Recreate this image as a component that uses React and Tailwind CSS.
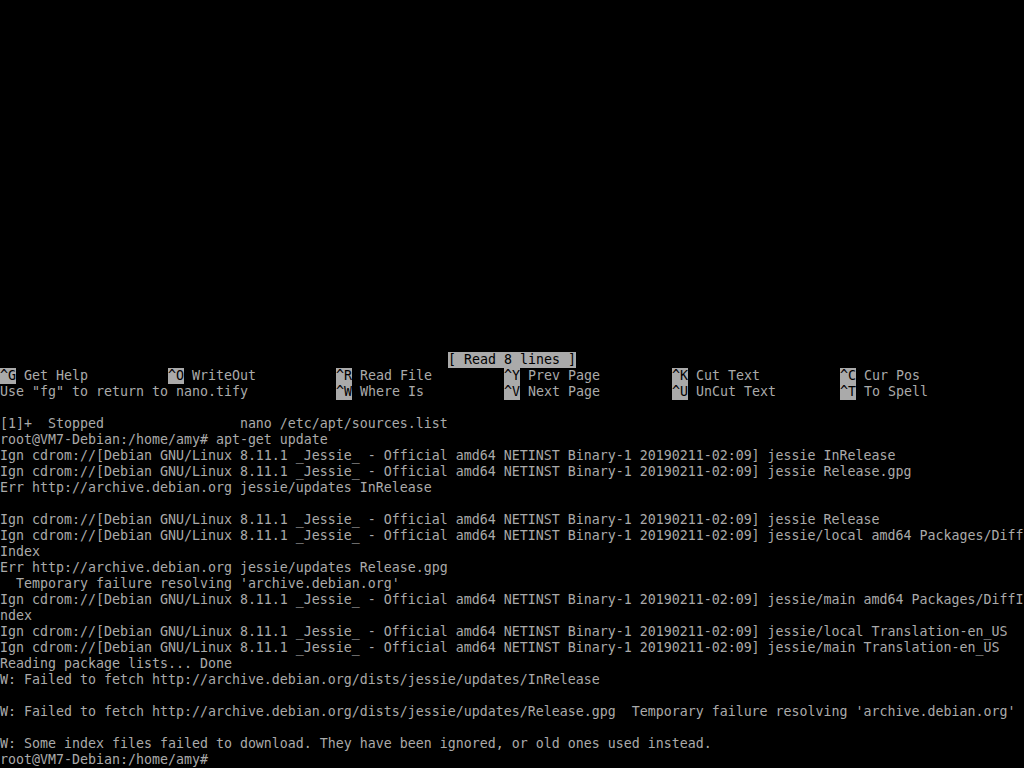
const ign = 'Ign cdrom://[Debian GNU/Linux 8.11.1 _Jessie_ - Official amd64 NETINST Binary-1 20190211-02:09] '

// reverse-video cell, full 16px row height like the console
const Hi = ({ children }) => (
  <span className="inline-block h-[16px] align-top bg-[#aaaaaa] text-black">{children}</span>
)

// shortcut cell in the nano help bar: highlighted key + label, 21 columns wide
const Key = ({ k, label }) => (
  <span className="inline-block w-[168px] align-top">
    <Hi>{k}</Hi> {label}
  </span>
)

const Line = ({ children }) => (
  <div className="h-[16px] leading-[16px] whitespace-pre">{children}</div>
)

const App = () => {
  const tail = [
    '[1]+  Stopped                 nano /etc/apt/sources.list',
    'root@VM7-Debian:/home/amy# apt-get update',
    ign + 'jessie InRelease',
    ign + 'jessie Release.gpg',
    'Err http://archive.debian.org jessie/updates InRelease',
    '',
    ign + 'jessie Release',
    ign + 'jessie/local amd64 Packages/Diff',
    'Index',
    'Err http://archive.debian.org jessie/updates Release.gpg',
    "  Temporary failure resolving 'archive.debian.org'",
    ign + 'jessie/main amd64 Packages/DiffI',
    'ndex',
    ign + 'jessie/local Translation-en_US',
    ign + 'jessie/main Translation-en_US',
    'Reading package lists... Done',
    'W: Failed to fetch http://archive.debian.org/dists/jessie/updates/InRelease',
    '',
    "W: Failed to fetch http://archive.debian.org/dists/jessie/updates/Release.gpg  Temporary failure resolving 'archive.debian.org'",
    '',
    'W: Some index files failed to download. They have been ignored, or old ones used instead.',
    'root@VM7-Debian:/home/amy#',
  ]

  return (
    <div className="w-[1024px] h-[768px] bg-black text-[#aaaaaa] overflow-hidden font-['DejaVu_Sans_Mono',monospace] text-[13.29px]">
      {/* empty nano buffer area */}
      <div className="h-[352px]" />

      {/* status line */}
      <Line>
        <span className="inline-block w-[448px]" />
        <Hi>[ Read 8 lines ]</Hi>
      </Line>

      {/* help bar */}
      <Line>
        <Key k="^G" label="Get Help" />
        <Key k="^O" label="WriteOut" />
        <Key k="^R" label="Read File" />
        <Key k="^Y" label="Prev Page" />
        <Key k="^K" label="Cut Text" />
        <Key k="^C" label="Cur Pos" />
      </Line>
      <Line>
        <span className="inline-block w-[336px] align-top">Use "fg" to return to nano.tify</span>
        <Key k="^W" label="Where Is" />
        <Key k="^V" label="Next Page" />
        <Key k="^U" label="UnCut Text" />
        <Key k="^T" label="To Spell" />
      </Line>
      <Line />

      {tail.map((t, i) => (
        <Line key={i}>{t}</Line>
      ))}
    </div>
  )
}

export default App
